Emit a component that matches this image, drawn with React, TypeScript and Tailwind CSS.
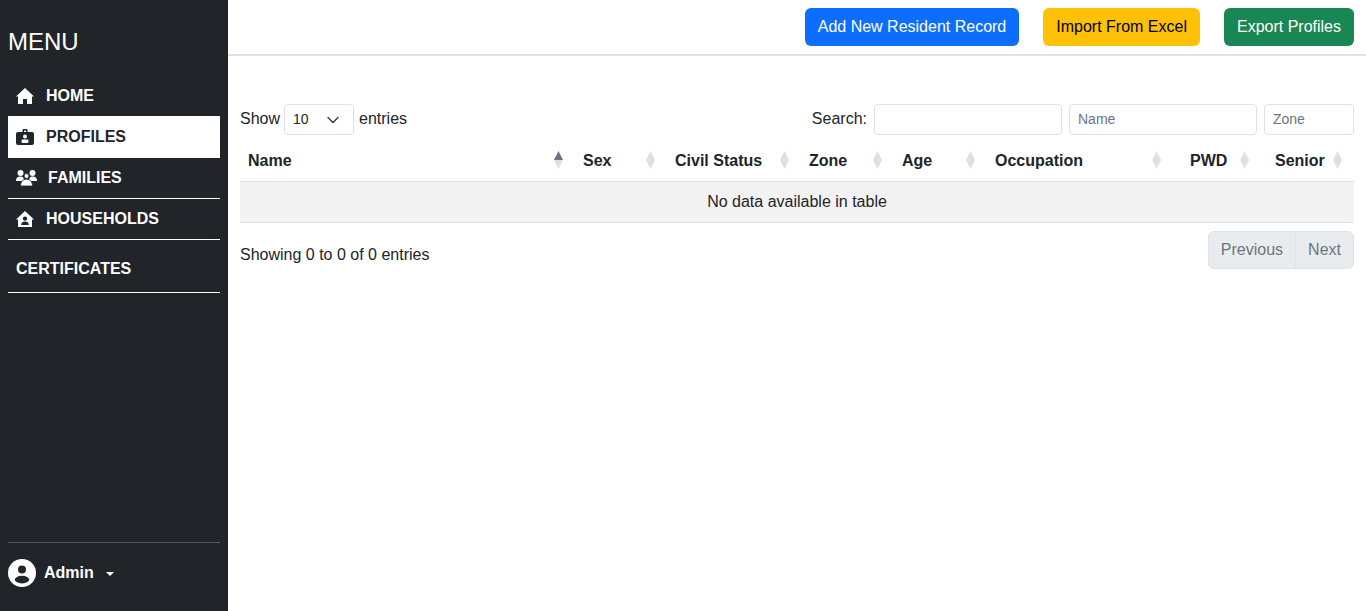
import { ChevronDown } from 'lucide-react';

const columns = [
  { label: 'Name', width: 'w-[335px]', pad: 'pl-2', active: true },
  { label: 'Sex', width: 'w-[92px]', pad: 'pl-2' },
  { label: 'Civil Status', width: 'w-[134px]', pad: 'pl-2' },
  { label: 'Zone', width: 'w-[93px]', pad: 'pl-2' },
  { label: 'Age', width: 'w-[93px]', pad: 'pl-2' },
  { label: 'Occupation', width: 'w-[186px]', pad: 'pl-2' },
  { label: 'PWD', width: 'w-[88px]', pad: 'pl-[17px]' },
  { label: 'Senior', width: 'w-[93px]', pad: 'pl-[14px]' },
];

function SortIcon({ active }: { active?: boolean }) {
  return (
    <svg className="absolute right-[12px] top-[11px]" width="9" height="18" viewBox="0 0 9 18">
      <path d="M4.5 0 L9 9 H0 Z" fill={active ? '#6b7280' : '#dee0e4'} />
      <path d="M4.5 18 L9 9 H0 Z" fill="#dee0e4" />
    </svg>
  );
}

function HomeIcon() {
  return (
    <svg width="18" height="16" viewBox="0 0 18 16" fill="currentColor">
      <path d="M9 0 L18 8.6 H16 V16 H11 V11 H7 V16 H2 V8.6 H0 Z" />
    </svg>
  );
}

function BadgeIcon() {
  return (
    <svg width="18" height="16" viewBox="0 0 18 16">
      <rect y="3" width="18" height="13" rx="2" fill="currentColor" />
      <rect x="6.5" y="0" width="5" height="4" rx="1" fill="currentColor" />
      <rect x="8" y="1.5" width="2" height="1.5" fill="#fff" />
      <circle cx="9" cy="7.5" r="2" fill="#fff" />
      <rect x="5.5" y="10.5" width="7" height="3.5" rx="1.2" fill="#fff" />
    </svg>
  );
}

function FamilyIcon() {
  return (
    <svg width="21" height="16" viewBox="0 0 21 16" fill="currentColor">
      <circle cx="4.5" cy="3" r="3" />
      <circle cx="16.5" cy="3" r="3" />
      <path d="M0 11 C0 7.5 2 6.5 4.5 6.5 C6.5 6.5 8 7.5 8 11 Z" />
      <path d="M13 11 C13 7.5 14.5 6.5 16.5 6.5 C19 6.5 21 7.5 21 11 Z" />
      <circle cx="10.5" cy="6" r="2.4" stroke="#212529" strokeWidth="0.8" />
      <path d="M4.5 16 C4.5 11.5 7 9.2 10.5 9.2 C14 9.2 16.5 11.5 16.5 16 Z" stroke="#212529" strokeWidth="0.8" />
    </svg>
  );
}

function HouseholdIcon() {
  return (
    <svg width="18" height="16" viewBox="0 0 18 16">
      <path d="M9 0 L18 8.6 H16 V16 H2 V8.6 H0 Z" fill="currentColor" />
      <circle cx="9" cy="7.6" r="2.2" fill="#212529" />
      <path d="M5.2 14 C5.2 11.6 6.8 10.6 9 10.6 C11.2 10.6 12.8 11.6 12.8 14 Z" fill="#212529" />
    </svg>
  );
}

function AvatarIcon() {
  return (
    <svg width="28" height="28" viewBox="0 0 28 28">
      <circle cx="14" cy="14" r="14" fill="#fff" />
      <circle cx="14" cy="10.6" r="4" fill="#212529" />
      <ellipse cx="14" cy="20.6" rx="7.2" ry="3.8" fill="#212529" />
    </svg>
  );
}

export default function App() {
  return (
    <div className="flex h-[611px] w-[1366px] overflow-hidden bg-white font-['Liberation_Sans',Arial,sans-serif] text-[16px] text-[#212529]">
      {/* Sidebar */}
      <aside className="flex w-[228px] shrink-0 flex-col bg-[#212529] px-2 text-white">
        <div className="mt-[28px] mb-[19px] text-[24px] leading-[28px]">MENU</div>
        <nav className="flex flex-col font-bold">
          <a className="flex h-[41px] items-center pl-2">
            <HomeIcon />
            <span className="ml-3">HOME</span>
          </a>
          <a className="flex h-[42px] items-center bg-white pl-2 text-[#212529]">
            <BadgeIcon />
            <span className="ml-3">PROFILES</span>
          </a>
          <a className="flex h-[41px] items-center border-b border-white pl-2">
            <FamilyIcon />
            <span className="ml-[11px]">FAMILIES</span>
          </a>
          <a className="flex h-[41px] items-center border-b border-white pl-2">
            <HouseholdIcon />
            <span className="ml-3">HOUSEHOLDS</span>
          </a>
          <a className="flex h-[53px] items-center border-b border-white pt-[6px] pl-2">CERTIFICATES</a>
        </nav>
        <div className="mt-auto mb-[15px] border-t border-[#54575b]" />
        <div className="mb-[25px] flex translate-y-px items-center font-bold">
          <AvatarIcon />
          <span className="ml-2">Admin</span>
          <span className="mt-[1px] ml-[12px] h-0 w-0 border-x-[4px] border-t-[4px] border-x-transparent border-t-white" />
        </div>
      </aside>

      {/* Main */}
      <main className="flex min-w-0 flex-1 flex-col">
        <header className="flex h-[56px] items-start justify-end gap-6 border-b-2 border-[#dee2e6] pt-2 pr-3">
          <button className="h-[38px] rounded-md bg-[#0d6efd] px-[13px] text-white">Add New Resident Record</button>
          <button className="h-[38px] rounded-md bg-[#ffc107] px-[13px] text-black">Import From Excel</button>
          <button className="h-[38px] rounded-md bg-[#198754] px-[13px] text-white">Export Profiles</button>
        </header>

        <section className="px-3 pt-[48px]">
          <div className="flex h-[31px] items-center justify-between">
            <div className="flex items-center">
              <span className="mb-[2px]">Show</span>
              <div className="ml-1 flex h-[31px] w-[70px] items-center justify-between rounded border border-[#dee2e6] pr-[10px] pl-[9px] text-[14px]">
                <span className="-ml-px">10</span>
                <ChevronDown size={20} strokeWidth={1.6} className="text-[#343a40]" />
              </div>
              <span className="mb-[2px] ml-[5px]">entries</span>
            </div>
            <div className="flex items-center text-[14px]">
              <span className="mr-[7px] mb-[2px] text-[16px]">Search:</span>
              <input className="h-[31px] w-[188px] rounded border border-[#dee2e6] px-2" />
              <input
                placeholder="Name"
                className="ml-[7px] h-[31px] w-[188px] rounded border border-[#dee2e6] px-2 pb-[2px] placeholder:text-[#6c757d]"
              />
              <input
                placeholder="Zone"
                className="ml-[7px] h-[31px] w-[90px] rounded border border-[#dee2e6] px-2 pb-[2px] placeholder:text-[#6c757d]"
              />
            </div>
          </div>

          <table className="mt-[5px] w-[1114px] table-fixed border-collapse">
            <thead>
              <tr className="h-[41px]">
                {columns.map((c) => (
                  <th key={c.label} className={`relative pt-[2px] text-left font-bold ${c.width} ${c.pad}`}>
                    {c.label}
                    <SortIcon active={c.active} />
                  </th>
                ))}
              </tr>
            </thead>
            <tbody>
              <tr className="h-[41px] border-y border-[#dee2e6] bg-[#f2f2f2]">
                <td colSpan={8} className="text-center">
                  No data available in table
                </td>
              </tr>
            </tbody>
          </table>

          <div className="mt-[8px] flex items-start justify-between">
            <div className="mt-[12px]">Showing 0 to 0 of 0 entries</div>
            <div className="flex h-[38px] rounded-md border border-[#dee2e6] bg-[#e9ecef] text-[#6c757d]">
              <span className="flex items-center border-r border-[#dee2e6] px-3">Previous</span>
              <span className="flex items-center px-3">Next</span>
            </div>
          </div>
        </section>
      </main>
    </div>
  );
}
